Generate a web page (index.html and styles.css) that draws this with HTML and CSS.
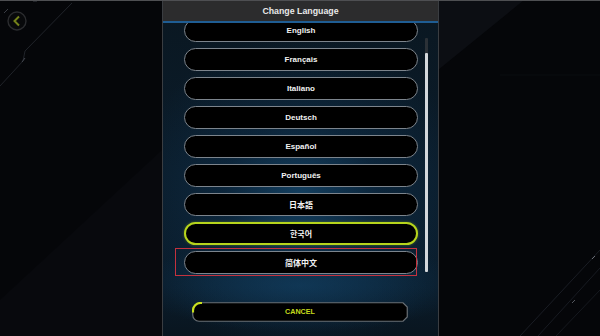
FILE: index.html
```html
<!DOCTYPE html>
<html lang="en">
<head>
<meta charset="utf-8">
<title>Change Language</title>
<link rel="stylesheet" href="styles.css">
</head>
<body>
<div class="screen">
  <svg class="backdrop" width="600" height="336" viewBox="0 0 600 336" aria-hidden="true">
    <polygon points="438,0 524,0 438,70" fill="#0c0e13"/>
    <polygon points="162,150 162,336 0,336 0,300" fill="#08090d"/>
    <polyline points="0,86 23,61 25,51 72,3" fill="none" stroke="#202329" stroke-width="1"/>
    <line x1="22" y1="62" x2="25" y2="58" stroke="#44474f" stroke-width="1"/>
    <line x1="4" y1="13" x2="8" y2="9" stroke="#3a3d44" stroke-width="1"/>
    <line x1="33" y1="1" x2="37" y2="1" stroke="#3a3d44" stroke-width="1"/>
    <line x1="600" y1="250" x2="520" y2="336" stroke="#1a1d24" stroke-width="1"/>
    <line x1="600" y1="268" x2="538" y2="336" stroke="#181b22" stroke-width="1"/>
    <line x1="600" y1="290" x2="556" y2="336" stroke="#16191f" stroke-width="1"/>
    <line x1="592" y1="259" x2="595" y2="256" stroke="#6a6d75" stroke-width="1"/>
    <line x1="572" y1="303" x2="575" y2="300" stroke="#55585f" stroke-width="1"/>
    <line x1="500" y1="75" x2="600" y2="75" stroke="#0a0c10" stroke-width="1"/>
  </svg>

  <button class="back" type="button" aria-label="Back">
    <svg width="20" height="20" viewBox="0 0 20 20">
      <circle cx="10" cy="10" r="9" fill="#08090b" stroke="#2b2c2f" stroke-width="1.4"/>
      <polyline points="12,5.5 7.5,10 12,14.5" fill="none" stroke="#74821a" stroke-width="2"/>
    </svg>
  </button>

  <section class="panel">
    <header class="header">Change Language</header>
    <div class="body">
      <div class="viewport">
        <ul class="list">
          <li class="item"><span class="lang">English</span></li>
          <li class="item"><span class="lang">Français</span></li>
          <li class="item"><span class="lang">Italiano</span></li>
          <li class="item"><span class="lang">Deutsch</span></li>
          <li class="item"><span class="lang">Español</span></li>
          <li class="item"><span class="lang">Português</span></li>
          <li class="item"><span class="lang cjk">日本語</span></li>
          <li class="item selected"><span class="lang cjk">한국어</span></li>
          <li class="item focused"><span class="lang cjk">简体中文</span></li>
        </ul>
      </div>
      <div class="scroll"><div class="thumb"></div></div>
    </div>
    <footer class="footer">
      <button class="cancel" type="button">
        <svg class="cancel-frame" width="216" height="20" viewBox="0 0 216 20" aria-hidden="true">
          <path d="M8.5,0.75 H211 L215.25,5 V15 L211,19.25 H7 A6.25,6.25 0 0 1 0.75,13 V8.5 A7.75,7.75 0 0 1 8.5,0.75 Z" fill="#000" stroke="#6a7075" stroke-width="1.2"/>
          <path d="M1,10.5 V8.5 A7.5,7.5 0 0 1 8.5,1 H10" fill="none" stroke="#c8e01e" stroke-width="2.2"/>
        </svg>
        <span class="cancel-label">CANCEL</span>
      </button>
    </footer>
  </section>
</div>
</body>
</html>
```

FILE: styles.css
```css
* { box-sizing: border-box; }

html, body {
  margin: 0;
  padding: 0;
  background: #050609;
}

.screen {
  position: relative;
  width: 600px;
  height: 336px;
  overflow: hidden;
  background: #050609;
  border-top: 1px solid #4e4f52;
  display: flex;
  justify-content: center;
  font-family: "Liberation Sans", Arial, "Noto Sans CJK SC", "Noto Sans CJK KR", "Noto Sans CJK JP", sans-serif;
}

.backdrop {
  position: absolute;
  left: 0;
  top: -1px;
}

.back {
  position: absolute;
  left: 7px;
  top: 10px;
  width: 20px;
  height: 20px;
  padding: 0;
  border: 0;
  background: none;
}

.back svg { display: block; }

.panel {
  position: relative;
  width: 277px;
  height: 335px;
  margin-left: 1px;
  display: flex;
  flex-direction: column;
  border-left: 1px solid #3a3d41;
  border-right: 1px solid #3a3d41;
  background:
    radial-gradient(ellipse 60% 14% at 50% 85%, rgba(20, 70, 108, 0.55) 0%, rgba(20, 70, 108, 0) 100%),
    radial-gradient(ellipse 62% 48% at 50% 58%, rgba(22, 74, 112, 0.75) 0%, rgba(14, 50, 80, 0.45) 45%, rgba(10, 28, 44, 0) 100%),
    linear-gradient(180deg, #0a1721 0%, #0b1c2a 50%, #0a1c2b 85%, #09151f 100%);
}

.header {
  height: 22px;
  flex: none;
  background: #2c2c2d;
  border-bottom: 2px solid #1f5d93;
  color: #e8e8e8;
  font-weight: bold;
  font-size: 8.8px;
  line-height: 20px;
  text-align: center;
}

.body {
  flex: none;
  height: 258px;
  display: flex;
}

.viewport {
  width: 262px;
  height: 258px;
  overflow: hidden;
}

.list {
  list-style: none;
  margin: -4px 0 0 0;
  padding: 0 0 0 21px;
  display: flex;
  flex-direction: column;
  gap: 6px;
}

.item {
  position: relative;
  width: 234px;
  height: 23px;
  border: 1.4px solid #7c848c;
  border-radius: 12px;
  background: #000;
  display: flex;
  align-items: center;
  justify-content: center;
}

.lang {
  color: #f2f2f2;
  font-weight: bold;
  font-size: 8px;
  line-height: 1;
}

.cjk {
  font-family: "Noto Sans CJK SC", "Noto Sans CJK KR", "Noto Sans CJK JP", sans-serif;
  font-weight: 700;
}

.selected {
  border: 2px solid #b6d41c;
  box-shadow: 0 0 3px rgba(182, 212, 28, 0.35);
}

.focused::after {
  content: "";
  position: absolute;
  left: -10px;
  right: 0;
  top: -4px;
  bottom: -3px;
  border: 1.5px solid #c4323e;
}

.scroll {
  margin-top: 15px;
  width: 3px;
  height: 234px;
  background: #2b3137;
  border-radius: 1px;
  display: flex;
  flex-direction: column;
  justify-content: flex-end;
}

.thumb {
  height: 219px;
  background: #d4d8dc;
  border-radius: 1px;
}

.footer {
  flex: none;
  padding: 21px 0 0 29px;
}

.cancel {
  position: relative;
  width: 216px;
  height: 20px;
  padding: 0;
  border: 0;
  background: none;
  display: flex;
  align-items: center;
  justify-content: center;
}

.cancel-frame {
  position: absolute;
  left: 0;
  top: 0;
}

.cancel-label {
  position: relative;
  color: #c5dc1c;
  font-family: "Liberation Sans", Arial, sans-serif;
  font-weight: bold;
  font-size: 7.2px;
  line-height: 1;
}
```
